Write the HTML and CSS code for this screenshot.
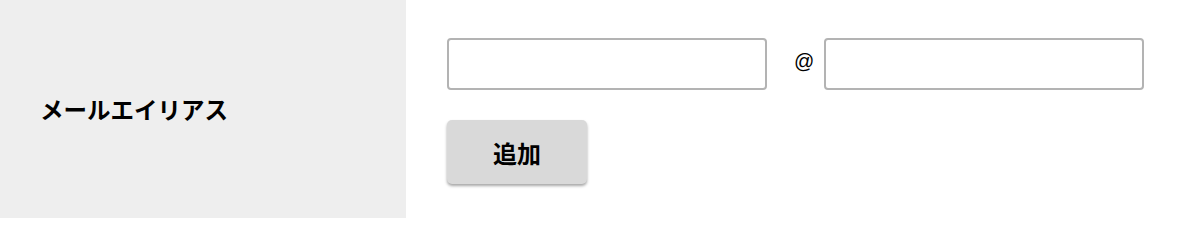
FILE: index.html
```html
<!DOCTYPE html>
<html lang="ja">
<head>
<meta charset="utf-8">
<title>メールエイリアス</title>
<link rel="stylesheet" href="styles.css">
</head>
<body>
<div class="row">
  <div class="label-cell">
    <span class="label">メールエイリアス</span>
  </div>
  <div class="field-cell">
    <div class="inputs">
      <input class="text-input" type="text" aria-label="エイリアス名">
      <span class="at">@</span>
      <input class="text-input" type="text" aria-label="ドメイン">
    </div>
    <button class="add-btn" type="button">追加</button>
  </div>
</div>
</body>
</html>
```

FILE: styles.css
```css
html, body {
  margin: 0;
  padding: 0;
  background: #ffffff;
}

body {
  font-family: "Noto Sans CJK JP", "Noto Sans", sans-serif;
  color: #000;
}

.row {
  display: flex;
  height: 218px;
}

.label-cell {
  width: 366px;
  background: #eeeeee;
  padding-left: 40px;
  display: flex;
  align-items: center;
}

.label {
  font-size: 23.5px;
  font-weight: 700;
  line-height: 1;
  margin-top: 2px;
}

.field-cell {
  padding: 38px 0 0 41px;
  display: flex;
  flex-direction: column;
  align-items: flex-start;
}

.inputs {
  display: flex;
  align-items: center;
}

.text-input {
  box-sizing: border-box;
  width: 320px;
  height: 52px;
  border: 2px solid #b3b3b3;
  border-radius: 4px;
  background: #fff;
  margin: 0;
  padding: 0 10px;
  font: inherit;
  outline: none;
}

.at {
  font-family: "Liberation Sans", Arial, sans-serif;
  font-size: 20px;
  line-height: 1;
  margin: 0 10px 7px 27px;
}

.add-btn {
  margin-top: 30px;
  width: 140px;
  height: 64px;
  border: none;
  border-radius: 5px;
  background: #d9d9d9;
  box-shadow: 0 2px 3px rgba(0, 0, 0, 0.35);
  font-family: "Noto Sans CJK JP", sans-serif;
  font-size: 24px;
  font-weight: 700;
  color: #000;
  padding: 0;
}
```
